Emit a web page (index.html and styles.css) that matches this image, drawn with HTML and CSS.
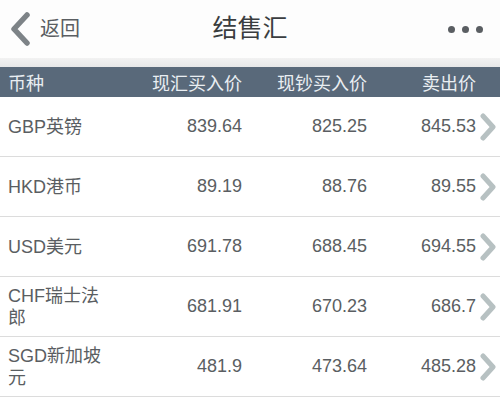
FILE: index.html
```html
<!DOCTYPE html>
<html lang="zh">
<head>
<meta charset="utf-8">
<link rel="stylesheet" href="styles.css">
</head>
<body>
<div class="app">
  <header class="nav">
    <div class="back">
      <svg class="back-icon" width="24" height="34" viewBox="0 0 24 34">
        <polyline points="19,3 6,17 19,31" fill="none" stroke="#7d8387" stroke-width="5.5" stroke-linecap="round" stroke-linejoin="round"/>
      </svg>
      <span class="back-text">返回</span>
    </div>
    <h1 class="title">结售汇</h1>
    <div class="more">
      <span class="dot"></span><span class="dot"></span><span class="dot"></span>
    </div>
  </header>
  <div class="strip"></div>
  <div class="thead">
    <span class="c1">币种</span>
    <span class="num">现汇买入价</span>
    <span class="num">现钞买入价</span>
    <span class="num">卖出价</span>
    <span></span>
  </div>
  <div class="rows">
    <div class="row">
      <span class="c1">GBP英镑</span>
      <span class="num">839.64</span>
      <span class="num">825.25</span>
      <span class="num">845.53</span>
      <svg class="chev" width="20" height="28" viewBox="0 0 20 28"><polyline points="5,3 15,14 5,25" fill="none" stroke="#b7c1c2" stroke-width="5" stroke-linecap="round" stroke-linejoin="round"/></svg>
    </div>
    <div class="row">
      <span class="c1">HKD港币</span>
      <span class="num">89.19</span>
      <span class="num">88.76</span>
      <span class="num">89.55</span>
      <svg class="chev" width="20" height="28" viewBox="0 0 20 28"><polyline points="5,3 15,14 5,25" fill="none" stroke="#b7c1c2" stroke-width="5" stroke-linecap="round" stroke-linejoin="round"/></svg>
    </div>
    <div class="row">
      <span class="c1">USD美元</span>
      <span class="num">691.78</span>
      <span class="num">688.45</span>
      <span class="num">694.55</span>
      <svg class="chev" width="20" height="28" viewBox="0 0 20 28"><polyline points="5,3 15,14 5,25" fill="none" stroke="#b7c1c2" stroke-width="5" stroke-linecap="round" stroke-linejoin="round"/></svg>
    </div>
    <div class="row">
      <span class="c1">CHF瑞士法郎</span>
      <span class="num">681.91</span>
      <span class="num">670.23</span>
      <span class="num">686.7</span>
      <svg class="chev" width="20" height="28" viewBox="0 0 20 28"><polyline points="5,3 15,14 5,25" fill="none" stroke="#b7c1c2" stroke-width="5" stroke-linecap="round" stroke-linejoin="round"/></svg>
    </div>
    <div class="row">
      <span class="c1">SGD新加坡元</span>
      <span class="num">481.9</span>
      <span class="num">473.64</span>
      <span class="num">485.28</span>
      <svg class="chev" width="20" height="28" viewBox="0 0 20 28"><polyline points="5,3 15,14 5,25" fill="none" stroke="#b7c1c2" stroke-width="5" stroke-linecap="round" stroke-linejoin="round"/></svg>
    </div>
  </div>
</div>
</body>
</html>
```
FILE: styles.css
```css
html, body {
  margin: 0;
  padding: 0;
  background: #ffffff;
}
body {
  width: 500px;
  height: 405px;
  overflow: hidden;
  font-family: "Liberation Sans", "Noto Sans CJK SC", sans-serif;
}
.app {
  display: flex;
  flex-direction: column;
}
.nav {
  height: 58px;
  display: grid;
  grid-template-columns: 1fr auto 1fr;
  align-items: center;
  background: #fdfdfd;
}
.back {
  display: flex;
  align-items: center;
  padding-left: 8px;
  gap: 8px;
}
.back-icon {
  display: block;
}
.back-text {
  font-size: 20px;
  color: #5a5e62;
  line-height: 1;
}
.title {
  margin: 0;
  font-size: 25px;
  font-weight: normal;
  color: #3a3d40;
  line-height: 1;
  padding-bottom: 2px;
}
.more {
  display: flex;
  justify-content: flex-end;
  gap: 7px;
  padding-right: 17px;
}
.dot {
  width: 7px;
  height: 7px;
  border-radius: 50%;
  background: #5a5e62;
}
.strip {
  height: 9px;
  background: linear-gradient(#f2f2f2, #e6e7e8);
}
.thead, .row {
  display: grid;
  grid-template-columns: 100px 134px 125px 109px 24px;
  padding-left: 8px;
  align-items: center;
}
.thead {
  height: 30px;
  background: #59697a;
  color: #e9eef2;
  font-size: 18px;
  box-sizing: border-box;
}
.thead .num {
  text-align: right;
}
.row {
  height: 60px;
  box-sizing: border-box;
  border-bottom: 1px solid #dcdcdc;
  font-size: 18px;
  color: #5a5e62;
}
.row .c1 {
  line-height: 22px;
}
.row .num {
  text-align: right;
}
.chev {
  display: block;
  margin-left: 2px;
}
```
